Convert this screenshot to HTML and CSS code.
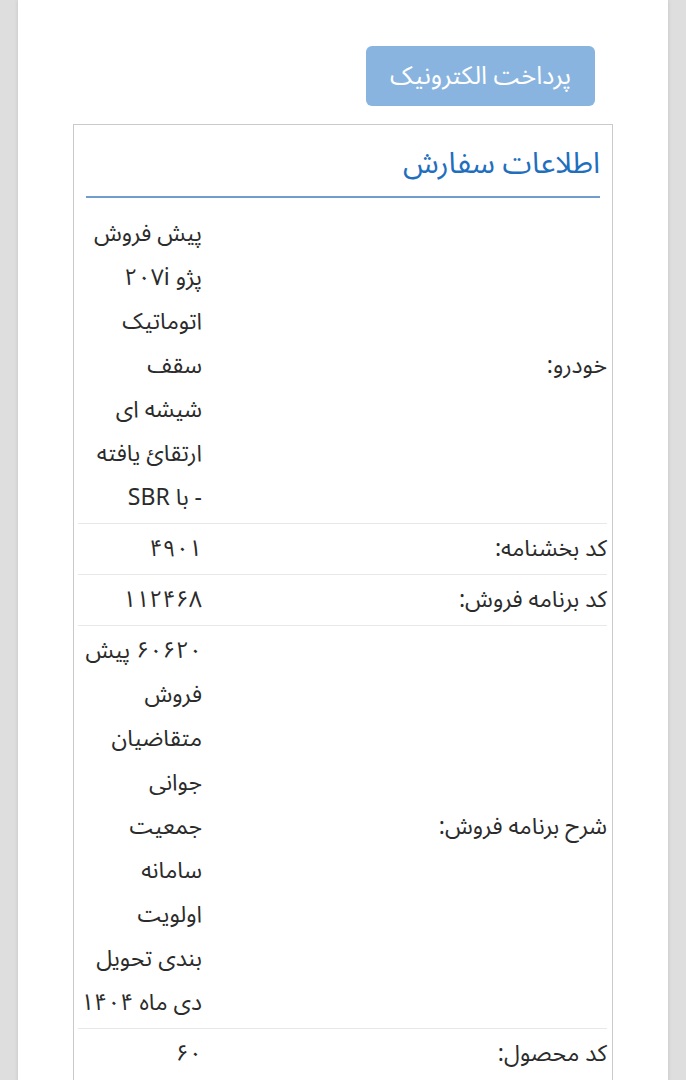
FILE: index.html
```html
<!DOCTYPE html>
<html lang="fa" dir="rtl">
<head>
<meta charset="utf-8">
<title>اطلاعات سفارش</title>
<link rel="stylesheet" href="styles.css">
</head>
<body>
<div class="page">
  <div class="actions">
    <button class="pay-btn" type="button" disabled>پرداخت الکترونیک</button>
  </div>
  <div class="card">
    <div class="card-head">
      <h2 class="card-title">اطلاعات سفارش</h2>
    </div>
    <table class="info">
      <colgroup><col class="col-label"><col class="col-value"></colgroup>
      <tr>
        <td class="label">خودرو:</td>
        <td class="value"><span class="ln">پیش فروش</span><span class="ln">پژو ۲۰۷i</span><span class="ln">اتوماتیک</span><span class="ln">سقف</span><span class="ln">شیشه ای</span><span class="ln">ارتقائ یافته</span><span class="ln">- با SBR</span></td>
      </tr>
      <tr>
        <td class="label">کد بخشنامه:</td>
        <td class="value"><span class="ln">۴۹۰۱</span></td>
      </tr>
      <tr>
        <td class="label">کد برنامه فروش:</td>
        <td class="value"><span class="ln">۱۱۲۴۶۸</span></td>
      </tr>
      <tr>
        <td class="label">شرح برنامه فروش:</td>
        <td class="value"><span class="ln">۶۰۶۲۰ پیش</span><span class="ln">فروش</span><span class="ln">متقاضیان</span><span class="ln">جوانی</span><span class="ln">جمعیت</span><span class="ln">سامانه</span><span class="ln">اولویت</span><span class="ln">بندی تحویل</span><span class="ln">دی ماه ۱۴۰۴</span></td>
      </tr>
      <tr>
        <td class="label">کد محصول:</td>
        <td class="value"><span class="ln">۶۰</span></td>
      </tr>
    </table>
  </div>
</div>
</body>
</html>
```

FILE: styles.css
```css
html, body {
  margin: 0;
  padding: 0;
}
body {
  background: #dedede;
  font-family: "Noto Sans Arabic", "Noto Naskh Arabic", "DejaVu Sans", sans-serif;
  color: #2b2b2b;
  direction: rtl;
}
.page {
  margin: 0 18px;
  background: #ffffff;
  min-height: 1080px;
  padding-top: 46px;
  box-sizing: border-box;
  box-shadow: 0 0 4px rgba(0,0,0,0.12);
}
.actions {
  display: flex;
  justify-content: flex-start;
  padding-right: 73px;
}
.pay-btn {
  width: 229px;
  height: 60px;
  background: #88b4df;
  color: #ffffff;
  border: none;
  border-radius: 6px;
  font-family: inherit;
  font-size: 25.3px;
  line-height: 60px;
  padding: 0;
}
.card {
  margin: 18px 55px 0;
  border: 1px solid #cacaca;
  border-bottom: none;
  min-height: 960px;
}
.card-head {
  margin: 0 12px;
  padding-top: 19px;
  padding-bottom: 12px;
  border-bottom: 2px solid #6f9dcc;
}
.card-title {
  margin: 0;
  font-size: 29.5px;
  font-weight: normal;
  line-height: 40px;
  color: #1f6fbe;
}
.info {
  margin: 11px 5px 0 4px;
  width: calc(100% - 9px);
  border-collapse: collapse;
  table-layout: fixed;
  font-size: 23px;
  line-height: 44px;
}
.col-value {
  width: 128px;
}
.info tr + tr td {
  border-top: 1px solid #e8e8e8;
}
.info td {
  padding: 3px 4px 3px 5px;
  text-align: right;
}
.info td.label {
  padding-right: 0;
  vertical-align: middle;
}
.info td.value {
  white-space: nowrap;
  vertical-align: top;
}
.ln {
  display: block;
  height: 44px;
  overflow: visible;
}
```
